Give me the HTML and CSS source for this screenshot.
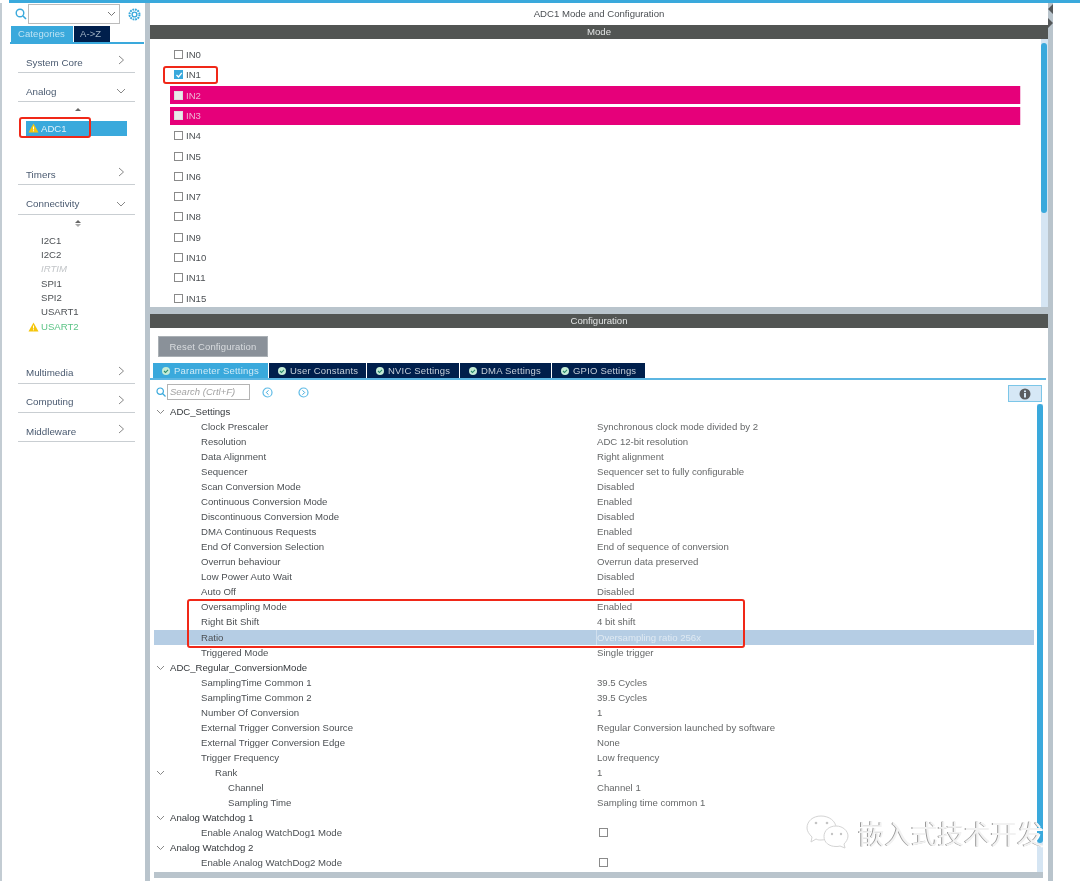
FILE: index.html
```html
<!DOCTYPE html>
<html lang="en">
<head>
<meta charset="utf-8">
<title>ADC1 Mode and Configuration</title>
<link rel="stylesheet" href="styles.css">
</head>
<body>
<div class="topline"></div>
<div class="app">
  <aside class="side">
    <div class="search-line">
      <svg class="ic-search" width="12" height="12" viewBox="0 0 12 12"><circle cx="5" cy="5" r="3.800" fill="none" stroke="#3aa9dc" stroke-width="1.400"/><path d="M8 8l3 3" stroke="#3aa9dc" stroke-width="1.600"/></svg>
      <div class="combo"><svg width="9" height="6" viewBox="0 0 9 6"><path d="M1 1l3.500 3.500L8 1" fill="none" stroke="#777" stroke-width="1"/></svg></div>
      <svg class="ic-gear" width="13" height="13" viewBox="0 0 13 13"><circle cx="6.500" cy="6.500" r="5" fill="none" stroke="#3aa9dc" stroke-width="2" stroke-dasharray="1.800 .8"/><circle cx="6.500" cy="6.500" r="2.400" fill="none" stroke="#3aa9dc" stroke-width="1.400"/></svg>
    </div>
    <div class="side-tabs"><span class="stab on">Categories</span><span class="stab">A-&gt;Z</span></div>
    <div class="cats">
      <div class="cat">System Core<svg class="chev" width="7" height="10" viewBox="0 0 7 10"><path d="M1 1l4.500 4L1 9" fill="none" stroke="#888" stroke-width="1"/></svg></div>
      <div class="cat">Analog<svg class="chevd" width="10" height="7" viewBox="0 0 10 7"><path d="M1 1l4 4 4-4" fill="none" stroke="#888" stroke-width="1"/></svg></div>
      <div class="sub sub-analog">
        <div class="updown"><i class="up"></i></div>
        <div class="item sel"><svg class="warn" width="11" height="10" viewBox="0 0 11 10"><path d="M5.500 .5l5 9h-10z" fill="#f5c60c"/><path d="M5.500 3.500v3M5.500 7.300v1" stroke="#fff" stroke-width="1"/></svg>ADC1</div>
      </div>
      <div class="cat">Timers<svg class="chev" width="7" height="10" viewBox="0 0 7 10"><path d="M1 1l4.500 4L1 9" fill="none" stroke="#888" stroke-width="1"/></svg></div>
      <div class="cat">Connectivity<svg class="chevd" width="10" height="7" viewBox="0 0 10 7"><path d="M1 1l4 4 4-4" fill="none" stroke="#888" stroke-width="1"/></svg></div>
      <div class="sub sub-conn">
        <div class="updown"><i class="up"></i><i class="down"></i></div>
        <div class="item">I2C1</div>
        <div class="item">I2C2</div>
        <div class="item off">IRTIM</div>
        <div class="item">SPI1</div>
        <div class="item">SPI2</div>
        <div class="item">USART1</div>
        <div class="item ok"><svg class="warn" width="11" height="10" viewBox="0 0 11 10"><path d="M5.500 .5l5 9h-10z" fill="#f5c60c"/><path d="M5.500 3.500v3M5.500 7.300v1" stroke="#fff" stroke-width="1"/></svg>USART2</div>
      </div>
      <div class="cat">Multimedia<svg class="chev" width="7" height="10" viewBox="0 0 7 10"><path d="M1 1l4.500 4L1 9" fill="none" stroke="#888" stroke-width="1"/></svg></div>
      <div class="cat">Computing<svg class="chev" width="7" height="10" viewBox="0 0 7 10"><path d="M1 1l4.500 4L1 9" fill="none" stroke="#888" stroke-width="1"/></svg></div>
      <div class="cat">Middleware<svg class="chev" width="7" height="10" viewBox="0 0 7 10"><path d="M1 1l4.500 4L1 9" fill="none" stroke="#888" stroke-width="1"/></svg></div>
    </div>
  </aside>

  <main class="main">
    <div class="title">ADC1 Mode and Configuration</div>
    <div class="bar">Mode</div>
    <section class="mode">
      <div class="pins">
        <div class="pin"><b class="cb"></b>IN0</div>
        <div class="pin"><b class="cb on"><svg width="8" height="8" viewBox="0 0 8 8"><path d="M1.500 4l2 2L6.800 1.800" fill="none" stroke="#fff" stroke-width="1.300"/></svg></b>IN1</div>
        <div class="pin hot"><b class="cb"></b>IN2</div>
        <div class="pin hot"><b class="cb"></b>IN3</div>
        <div class="pin"><b class="cb"></b>IN4</div>
        <div class="pin"><b class="cb"></b>IN5</div>
        <div class="pin"><b class="cb"></b>IN6</div>
        <div class="pin"><b class="cb"></b>IN7</div>
        <div class="pin"><b class="cb"></b>IN8</div>
        <div class="pin"><b class="cb"></b>IN9</div>
        <div class="pin"><b class="cb"></b>IN10</div>
        <div class="pin"><b class="cb"></b>IN11</div>
        <div class="pin"><b class="cb"></b>IN15</div>
      </div>
      <div class="vtrack mode-track"><div class="vthumb mode-thumb"></div></div>
    </section>
    <div class="split"></div>
    <div class="bar">Configuration</div>
    <section class="config">
      <div class="reset-wrap"><span class="reset">Reset Configuration</span></div>
      <div class="tabs">
        <span class="tab on t1"><svg class="dot" width="8" height="8" viewBox="0 0 8 8"><circle cx="4" cy="4" r="4" fill="#c4ecd6"/><path d="M2 4l1.500 1.500L6 2.800" fill="none" stroke="#2b8a6a" stroke-width="1.100"/></svg>Parameter Settings</span>
        <span class="tab t2"><svg class="dot" width="8" height="8" viewBox="0 0 8 8"><circle cx="4" cy="4" r="4" fill="#c4ecd6"/><path d="M2 4l1.500 1.500L6 2.800" fill="none" stroke="#2b8a6a" stroke-width="1.100"/></svg>User Constants</span>
        <span class="tab t3"><svg class="dot" width="8" height="8" viewBox="0 0 8 8"><circle cx="4" cy="4" r="4" fill="#c4ecd6"/><path d="M2 4l1.500 1.500L6 2.800" fill="none" stroke="#2b8a6a" stroke-width="1.100"/></svg>NVIC Settings</span>
        <span class="tab t4"><svg class="dot" width="8" height="8" viewBox="0 0 8 8"><circle cx="4" cy="4" r="4" fill="#c4ecd6"/><path d="M2 4l1.500 1.500L6 2.800" fill="none" stroke="#2b8a6a" stroke-width="1.100"/></svg>DMA Settings</span>
        <span class="tab t5"><svg class="dot" width="8" height="8" viewBox="0 0 8 8"><circle cx="4" cy="4" r="4" fill="#c4ecd6"/><path d="M2 4l1.500 1.500L6 2.800" fill="none" stroke="#2b8a6a" stroke-width="1.100"/></svg>GPIO Settings</span>
      </div>
      <div class="tools">
        <svg class="t-search" width="10" height="10" viewBox="0 0 10 10"><circle cx="4.200" cy="4.200" r="3.200" fill="none" stroke="#3aa9dc" stroke-width="1.200"/><path d="M6.500 6.500l3 3" stroke="#3aa9dc" stroke-width="1.300"/></svg>
        <span class="find">Search (Crtl+F)</span>
        <svg class="nav" width="11" height="11" viewBox="0 0 11 11"><circle cx="5.500" cy="5.500" r="4.500" fill="none" stroke="#5fbbe6" stroke-width="1.200"/><path d="M6.500 3.300L4.300 5.500l2.200 2.200" fill="none" stroke="#3aa9dc" stroke-width="1"/></svg>
        <svg class="nav" width="11" height="11" viewBox="0 0 11 11"><circle cx="5.500" cy="5.500" r="4.500" fill="none" stroke="#5fbbe6" stroke-width="1.200"/><path d="M4.500 3.300l2.200 2.200-2.200 2.200" fill="none" stroke="#3aa9dc" stroke-width="1"/></svg>
        <span class="info"><svg width="12" height="12" viewBox="0 0 12 12"><circle cx="6" cy="6" r="5.500" fill="#5a5d60"/><rect x="5" y="5" width="2" height="4.500" fill="#d6e8f6"/><rect x="5" y="2.500" width="2" height="1.600" fill="#d6e8f6"/></svg></span>
      </div>
      <div class="tree-wrap">
        <div class="tree">
          <div class="row group"><span class="k"><svg class="tw" width="9" height="6" viewBox="0 0 9 6"><path d="M1 1l3.500 3.500L8 1" fill="none" stroke="#888" stroke-width="1"/></svg>ADC_Settings</span></div>
          <div class="row"><span class="k l1">Clock Prescaler</span><span class="v">Synchronous clock mode divided by 2</span></div>
          <div class="row"><span class="k l1">Resolution</span><span class="v">ADC 12-bit resolution</span></div>
          <div class="row"><span class="k l1">Data Alignment</span><span class="v">Right alignment</span></div>
          <div class="row"><span class="k l1">Sequencer</span><span class="v">Sequencer set to fully configurable</span></div>
          <div class="row"><span class="k l1">Scan Conversion Mode</span><span class="v">Disabled</span></div>
          <div class="row"><span class="k l1">Continuous Conversion Mode</span><span class="v">Enabled</span></div>
          <div class="row"><span class="k l1">Discontinuous Conversion Mode</span><span class="v">Disabled</span></div>
          <div class="row"><span class="k l1">DMA Continuous Requests</span><span class="v">Enabled</span></div>
          <div class="row"><span class="k l1">End Of Conversion Selection</span><span class="v">End of sequence of conversion</span></div>
          <div class="row"><span class="k l1">Overrun behaviour</span><span class="v">Overrun data preserved</span></div>
          <div class="row"><span class="k l1">Low Power Auto Wait</span><span class="v">Disabled</span></div>
          <div class="row"><span class="k l1">Auto Off</span><span class="v">Disabled</span></div>
          <div class="row"><span class="k l1">Oversampling Mode</span><span class="v">Enabled</span></div>
          <div class="row"><span class="k l1">Right Bit Shift</span><span class="v">4 bit shift</span></div>
          <div class="row picked"><span class="k l1">Ratio</span><span class="v">Oversampling ratio 256x</span></div>
          <div class="row"><span class="k l1">Triggered Mode</span><span class="v">Single trigger</span></div>
          <div class="row group"><span class="k"><svg class="tw" width="9" height="6" viewBox="0 0 9 6"><path d="M1 1l3.500 3.500L8 1" fill="none" stroke="#888" stroke-width="1"/></svg>ADC_Regular_ConversionMode</span></div>
          <div class="row"><span class="k l1">SamplingTime Common 1</span><span class="v">39.5 Cycles</span></div>
          <div class="row"><span class="k l1">SamplingTime Common 2</span><span class="v">39.5 Cycles</span></div>
          <div class="row"><span class="k l1">Number Of Conversion</span><span class="v">1</span></div>
          <div class="row"><span class="k l1">External Trigger Conversion Source</span><span class="v">Regular Conversion launched by software</span></div>
          <div class="row"><span class="k l1">External Trigger Conversion Edge</span><span class="v">None</span></div>
          <div class="row"><span class="k l1">Trigger Frequency</span><span class="v">Low frequency</span></div>
          <div class="row"><span class="k l2"><svg class="tw" width="9" height="6" viewBox="0 0 9 6"><path d="M1 1l3.500 3.500L8 1" fill="none" stroke="#888" stroke-width="1"/></svg>Rank</span><span class="v">1</span></div>
          <div class="row"><span class="k l3">Channel</span><span class="v">Channel 1</span></div>
          <div class="row"><span class="k l3">Sampling Time</span><span class="v">Sampling time common 1</span></div>
          <div class="row group"><span class="k"><svg class="tw" width="9" height="6" viewBox="0 0 9 6"><path d="M1 1l3.500 3.500L8 1" fill="none" stroke="#888" stroke-width="1"/></svg>Analog Watchdog 1</span></div>
          <div class="row"><span class="k l1">Enable Analog WatchDog1 Mode</span><span class="v"><b class="cb plain"></b></span></div>
          <div class="row group"><span class="k"><svg class="tw" width="9" height="6" viewBox="0 0 9 6"><path d="M1 1l3.500 3.500L8 1" fill="none" stroke="#888" stroke-width="1"/></svg>Analog Watchdog 2</span></div>
          <div class="row"><span class="k l1">Enable Analog WatchDog2 Mode</span><span class="v"><b class="cb plain"></b></span></div>
        </div>
        <div class="vtrack tree-track"><div class="vthumb tree-thumb"></div></div>
      </div>
      <div class="hscroll"></div>
    </section>
  </main>

  <div class="rail">
    <svg class="arrows" width="6" height="26" viewBox="0 0 6 26"><path d="M5 0v10L0 5zM0 14v10l5-5z" fill="#55585a"/></svg>
  </div>
</div>

<span class="mark m-adc"></span>
<span class="mark m-in1"></span>
<span class="mark m-over"></span>
<div class="wm">
  <svg width="44" height="38" viewBox="0 0 44 38"><g fill="#fff" stroke="#d4d4d4" stroke-width="1"><path d="M15 2c8 0 15 5 15 12s-7 12-15 12c-2 0-3 0-5-1l-5 3 1-5C3 20 1 17 1 14 1 7 7 2 15 2z"/><path d="M30 12c7 0 12 5 12 10 0 3-2 6-4 8l1 4-5-2c-1 .5-3 .5-4 .5-7 0-12-4-12-10s5-10.500 12-10.500z"/></g><g fill="#c4c4c4"><circle cx="10" cy="9" r="1.300"/><circle cx="21" cy="9" r="1.300"/><circle cx="26" cy="20" r="1.200"/><circle cx="35" cy="20" r="1.200"/></g></svg>
  <span class="wm-text">嵌入式技术开发</span>
</div>
</body>
</html>
```
FILE: styles.css
```css
* { box-sizing: border-box; }
html, body { margin: 0; padding: 0; height: 881px; overflow: hidden; background: #fff; }
body { font-family: "Liberation Sans", Arial, sans-serif; font-size: 9.600px; color: #555a60; position: relative; filter: blur(.3px); }

.topline { height: 3px; margin-left: 9px; background: #3aa9dc; }
.app { display: flex; height: 878px; border-left: 2px solid #c3ccd3; width: 1053px; }
.side { width: 148px; flex: none; padding-left: 8px; border-right: 5px solid #b9c4cc; }
.search-line { display: flex; align-items: center; height: 20px; margin-top: 1px; padding-left: 5px; }
.ic-search { margin-right: 1px; }
.combo { width: 92px; height: 20px; border: 1px solid #bbb; display: flex; align-items: center; justify-content: flex-end; padding-right: 3px; }
.ic-gear { margin-left: 8px; }
.side-tabs { display: flex; height: 18px; margin-top: 2px; padding-left: 1px; border-bottom: 2px solid #3aa9dc; width: 134px; }
.stab { background: #001f4c; color: #9fb2c4; font-size: 9.500px; letter-spacing: .1px; line-height: 15px; padding: 0 6px; width: 36px; margin-left: 1px; white-space: nowrap; }
.stab.on { background: #3aa9dc; color: #bfe3f3; width: 62px; margin-left: 0; padding-left: 7px; }
.cats { padding-left: 8px; width: 125px; padding-top: 9px; }
.cat { height: 20px; margin-bottom: 9.300px; border-bottom: 1px solid #c9ced2; color: #4a5a70; font-size: 9.800px; line-height: 15px; position: relative; padding: 1.500px 0 0 8px; }
.chev { position: absolute; right: 10px; top: 2px; }
.chevd { position: absolute; right: 9px; top: 6px; }
.sub { padding-left: 8px; margin-top: -4px; }
.sub-analog { height: 57.700px; }
.sub-conn { height: 143.700px; }
.updown { height: 14px; padding-left: 49px; display: flex; flex-direction: column; gap: 1px; }
.up, .down { display: block; width: 0; height: 0; border-left: 3px solid transparent; border-right: 3px solid transparent; }
.up { border-bottom: 3px solid #666; }
.down { border-top: 3px solid #aaa; }
.item { height: 14.300px; line-height: 14.300px; padding-left: 15px; color: #4c5054; position: relative; }
.item.sel { background: #3aa9dc; color: #dff1fa; height: 15px; line-height: 15px; margin-top: -1px; width: 101px; }
.item.off { color: #c2c5c8; font-style: italic; }
.item.ok { color: #5cc486; }
.warn { position: absolute; left: 2px; top: 2px; }

.main { flex: 1; min-width: 0; display: flex; flex-direction: column; }
.title { height: 22px; line-height: 22px; text-align: center; color: #4c5054; }
.bar { height: 14px; background: #525553; color: #e2e4e4; text-align: center; line-height: 14px; flex: none; }
.mode { height: 268px; flex: none; display: flex; position: relative; overflow: hidden; }
.pins { flex: 1; padding: 5.500px 0 0 20px; display: flex; flex-direction: column; }
.pin { height: 20.300px; flex: none; display: flex; align-items: center; color: #4c5054; padding-left: 4px; width: 851px; }
.pin.hot { background: #e6007a; color: #eeb6d4; height: 18px; margin: 1.150px 0; border-right: 1px solid #f7c3df; }
.cb { display: inline-block; width: 9px; height: 9px; border: 1px solid #8a8a8a; background: #fff; margin-right: 3px; flex: none; position: relative; }
.cb.on { background: #3aa9dc; border-color: #3aa9dc; }
.cb svg { position: absolute; left: 0; top: 0; }
.hot .cb { background: #e9e9e9; border-color: #ddd; }
.cb.plain { margin: 0 0 0 2px; vertical-align: -1px; }
.vtrack { width: 7px; flex: none; background: #d5e5f3; }
.vthumb { background: #3aa9dc; border-radius: 3px; width: 6px; }
.mode-thumb { height: 170px; margin-top: 4px; }
.split { height: 7px; background: #b9c4cc; flex: none; }
.config { flex: 1; min-height: 0; display: flex; flex-direction: column; position: relative; }
.reset-wrap { height: 30px; padding: 8px 0 0 8px; flex: none; }
.reset { display: block; width: 110px; height: 21px; line-height: 20px; background: #8a9199; border: 1px solid #aab0b5; color: #d9dcdf; font-size: 9.500px; letter-spacing: .15px; text-align: center; }
.tabs { display: flex; height: 17px; margin-top: 5px; padding-left: 3px; border-bottom: 2px solid #5cb6e2; flex: none; width: 896px; }
.tab { background: #001f4c; color: #c3ced8; font-size: 9.500px; letter-spacing: .2px; line-height: 14px; padding-left: 9px; display: flex; align-items: center; border-left: 1px solid #fff; height: 15px; white-space: nowrap; }
.tab.on { background: #3aa9dc; color: #cfeaf6; border-left: 0; }
.t1 { width: 115px; }
.t2 { width: 98px; }
.t3 { width: 93px; }
.t4 { width: 92px; }
.t5 { width: 94px; }
.dot { display: block; margin-right: 4px; flex: none; }
.tools { height: 24px; flex: none; display: flex; align-items: center; padding-left: 6px; position: relative; }
.find { width: 83px; height: 16px; border: 1px solid #b4b4b4; margin-left: 1px; font-style: italic; color: #a3a3a3; line-height: 14px; padding-left: 2px; font-size: 9.500px; }
.nav { margin-left: 12px; }
.nav + .nav { margin-left: 25px; }
.info { position: absolute; right: 6px; top: 5px; width: 34px; height: 17px; background: #d6e8f6; border: 1px solid #7cc6e8; display: flex; align-items: center; justify-content: center; }
.tree-wrap { flex: 1; min-height: 0; display: flex; padding-left: 4px; overflow: hidden; }
.tree { width: 880px; flex: none; margin-top: -.4px; }
.row { height: 15.070px; display: flex; line-height: 15px; position: relative; }
.k { width: 443px; flex: none; color: #4c5054; padding-left: 16px; white-space: nowrap; }
.group .k { color: #34383c; }
.k.l1 { padding-left: 47px; }
.k.l2 { padding-left: 61px; }
.k.l3 { padding-left: 74px; }
.v { color: #666869; white-space: nowrap; }
.tw { position: absolute; left: 2px; top: 5px; }
.row.picked { background: #b5cde4; }
.row.picked .v { color: #dfe9f2; border-left: 1px solid #d0dfee; margin-left: -1px; }
.tree-track { margin-left: 3px; width: 6px; }
.tree-thumb { height: 439px; }
.hscroll { height: 6px; flex: none; margin: 0 5px 3px 4px; background: #b9c4cc; }
.rail { width: 5px; flex: none; position: relative; background: #b9c4cc; }
.arrows { position: absolute; left: 0; top: 1px; }

.mark { position: absolute; border: 2px solid #f02818; border-radius: 3px; }
.m-adc { left: 19px; top: 117px; width: 72px; height: 21px; }
.m-in1 { left: 163px; top: 66px; width: 55px; height: 18px; }
.m-over { left: 187px; top: 599px; width: 558px; height: 49px; }
.wm { position: absolute; left: 806px; top: 814px; display: flex; align-items: center; }
.wm-text { font-family: "Noto Sans CJK SC", sans-serif; font-size: 26.500px; line-height: 38px; color: #f2f2f2; text-shadow: -1px 0 0 #999, 1px 1px 0 #fff; margin-left: 8px; white-space: nowrap; }
```
